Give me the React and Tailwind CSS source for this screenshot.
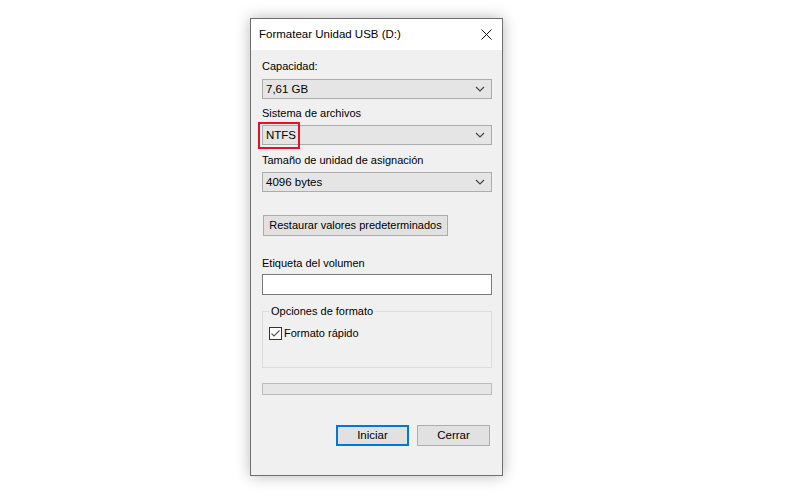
import React from 'react';

const font = { fontFamily: '"Liberation Sans", Arial, sans-serif' };

const Chevron = () => (
  <svg width="10" height="6" viewBox="0 0 10 6" className="shrink-0">
    <path d="M1 1 L5 5 L9 1" fill="none" stroke="#444" strokeWidth="1.2" />
  </svg>
);

const Select = ({ value, children }) => (
  <div className="relative h-[20px] w-[230px]">
    <div className="flex h-full items-center justify-between border border-[#acacac] bg-[#e5e5e5] pl-[3px] pr-[6px]">
      <span className="text-[11.5px] leading-[15px] text-black">{value}</span>
      <Chevron />
    </div>
    {children}
  </div>
);

const Label = ({ children, className = '' }) => (
  <div className={`text-[11px] leading-[15px] text-black ${className}`}>{children}</div>
);

const App = () => {
  return (
    <div className="min-h-[496px] w-full bg-white pt-[18px] pl-[250px]" style={font}>
      <div className="flex h-[458px] w-[253px] flex-col border border-[#6e6e6e] bg-[#f0f0f0] shadow-[0_0_14px_rgba(0,0,0,0.28)]">
        {/* title bar */}
        <div className="flex h-[31px] items-center justify-between bg-white pl-[8px] pr-[10px]">
          <span className="text-[11.5px] leading-[15px] text-black">Formatear Unidad USB (D:)</span>
          <svg width="11" height="11" viewBox="0 0 11 11">
            <path d="M0.5 0.5 L10.5 10.5 M10.5 0.5 L0.5 10.5" stroke="#111" strokeWidth="1" />
          </svg>
        </div>

        {/* body */}
        <div className="flex flex-col pl-[11px] pr-[10px] pt-[9px]">
          <Label>Capacidad:</Label>
          <div className="mt-[5px]">
            <Select value="7,61 GB" />
          </div>

          <Label className="mt-[7px]">Sistema de archivos</Label>
          <div className="mt-[4px]">
            <Select value="NTFS">
              <div className="absolute left-[-4px] top-[-3px] h-[27px] w-[42px] border-2 border-[#e81123]" />
            </Select>
          </div>

          <Label className="mt-[8px]">Tamaño de unidad de asignación</Label>
          <div className="mt-[4px]">
            <Select value="4096 bytes" />
          </div>

          <button className="ml-[1px] mt-[23px] h-[21px] w-[185px] whitespace-nowrap border border-[#adadad] bg-[#e1e1e1] text-[11px] leading-[15px] text-black">
            Restaurar valores predeterminados
          </button>

          <Label className="mt-[20px]">Etiqueta del volumen</Label>
          <div className="mt-[3px] h-[21px] w-[230px] border border-[#7a7a7a] bg-white" />

          <fieldset className="mt-[9px] h-[64px] w-[230px] border border-[#dcdcdc] pl-[6px]">
            <legend className="px-[2px] text-[11px] leading-[15px] text-black">Opciones de formato</legend>
            <div className="mt-[7px] flex items-center gap-[2px]">
              <div className="flex h-[13px] w-[13px] items-center justify-center border border-[#333] bg-white">
                <svg width="11" height="11" viewBox="0 0 11 11">
                  <path d="M1.5 5.5 L4 8 L9.5 2.5" fill="none" stroke="#555" strokeWidth="1.1" />
                </svg>
              </div>
              <span className="text-[11px] leading-[15px] text-black">Formato rápido</span>
            </div>
          </fieldset>

          <div className="mt-[15px] h-[12px] w-[230px] border border-[#bcbcbc] bg-[#e6e6e6]" />

          <div className="mt-[30px] flex justify-end gap-[8px] pr-[2px]">
            <button className="h-[21px] w-[73px] border-2 border-[#0078d7] bg-[#e1e1e1] text-[11.5px] leading-[15px] text-black">
              Iniciar
            </button>
            <button className="h-[21px] w-[73px] border border-[#adadad] bg-[#e1e1e1] text-[11.5px] leading-[15px] text-black">
              Cerrar
            </button>
          </div>
        </div>
      </div>
    </div>
  );
};

export default App;
